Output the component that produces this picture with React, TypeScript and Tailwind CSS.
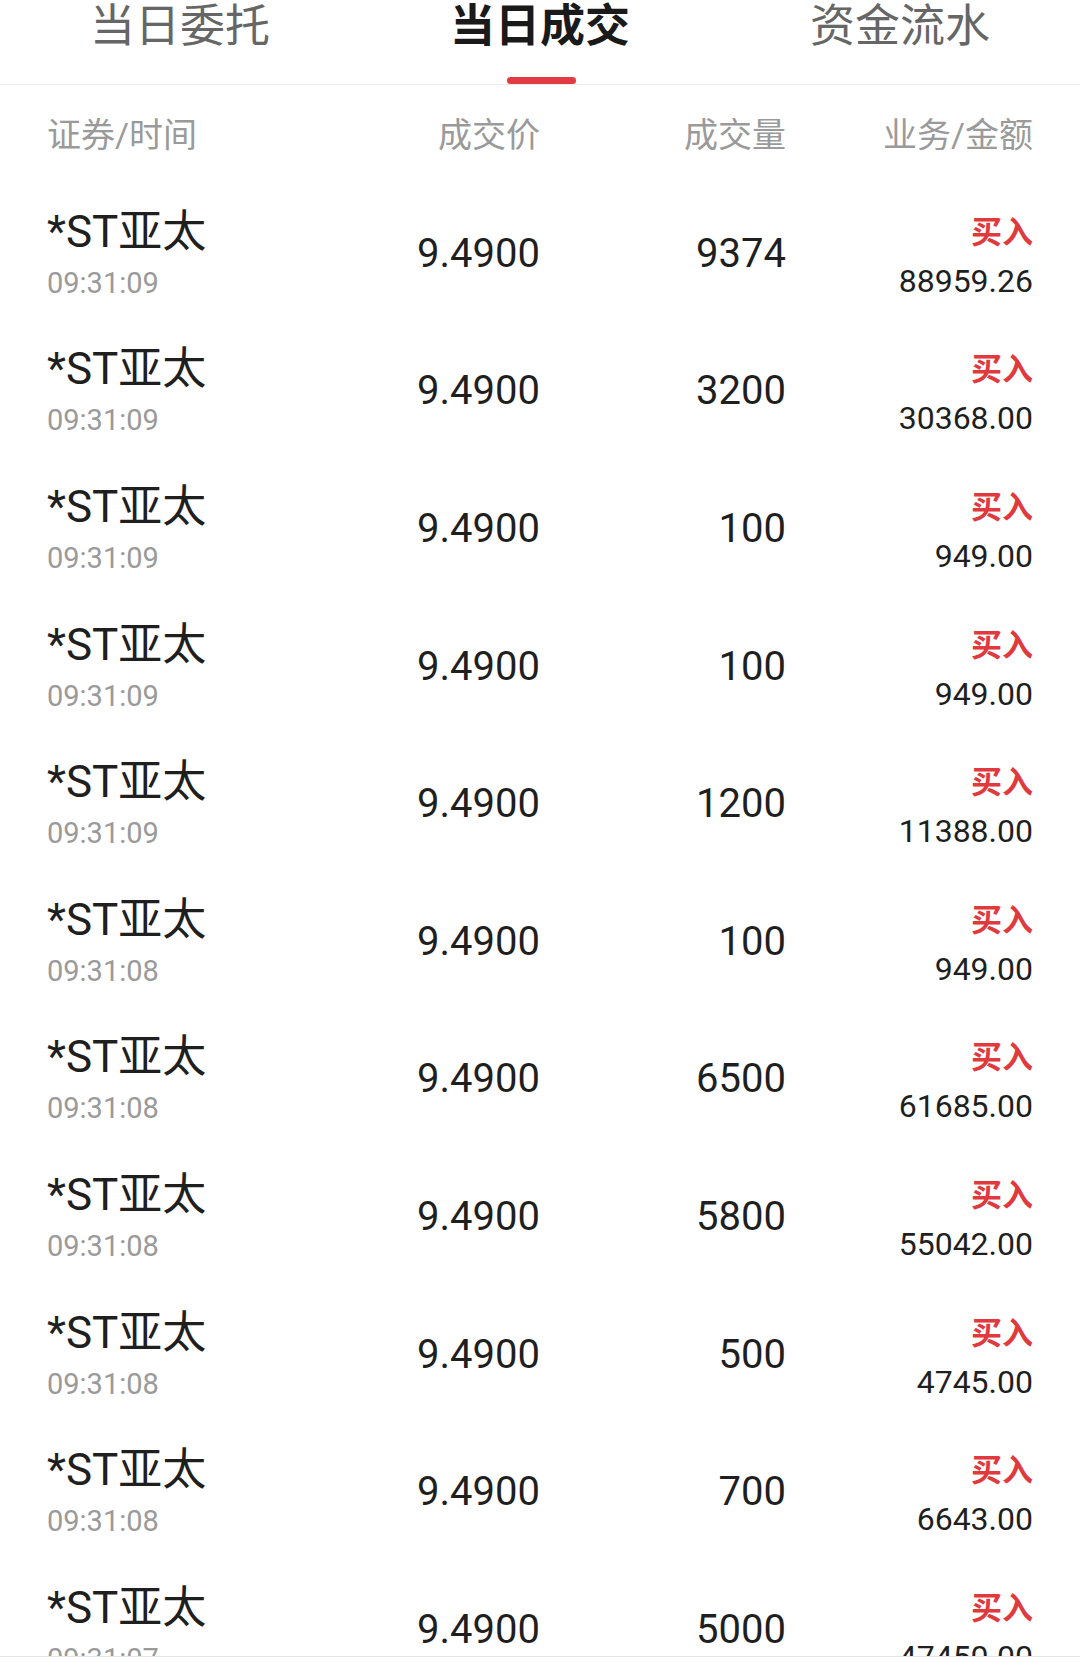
import React from 'react';

type Trade = {
    time: string;
    qty: string;
    amount: string;
};

const trades: Trade[] = [
    { time: '09:31:09', qty: '9374', amount: '88959.26' },
    { time: '09:31:09', qty: '3200', amount: '30368.00' },
    { time: '09:31:09', qty: '100', amount: '949.00' },
    { time: '09:31:09', qty: '100', amount: '949.00' },
    { time: '09:31:09', qty: '1200', amount: '11388.00' },
    { time: '09:31:08', qty: '100', amount: '949.00' },
    { time: '09:31:08', qty: '6500', amount: '61685.00' },
    { time: '09:31:08', qty: '5800', amount: '55042.00' },
    { time: '09:31:08', qty: '500', amount: '4745.00' },
    { time: '09:31:08', qty: '700', amount: '6643.00' },
    { time: '09:31:07', qty: '5000', amount: '47450.00' },
];

const tabs = ['当日委托', '当日成交', '资金流水'];

const font = {
    fontFamily: 'Roboto, "Noto Sans CJK SC", sans-serif',
};

export default function App() {
    return (
        <div className="h-[1673px] w-[1080px] overflow-hidden bg-white" style={font}>
            {/* top tabs */}
            <div className="flex h-[85px] border-b border-[#ececec]">
                {tabs.map((t, i) => (
                    <div key={t} className="relative flex flex-1 justify-center">
                        <span
                            className={
                                i === 1
                                    ? 'mt-[-2px] text-[45px] leading-[58px] font-bold text-[#1a1a1a]'
                                    : 'mt-[-2px] text-[45px] leading-[58px] text-[#666]'
                            }
                        >
                            {t}
                        </span>
                        {i === 1 && (
                            <div className="absolute bottom-[0px] left-[147px] h-[7px] w-[69px] rounded-full bg-[#e23b44]" />
                        )}
                    </div>
                ))}
            </div>

            {/* column header */}
            <div className="grid h-[100px] grid-cols-[300px_193px_246px_247px] items-center px-[47px] text-[34px] text-[#9a9a9a]">
                <div>证券/时间</div>
                <div className="text-right">成交价</div>
                <div className="text-right">成交量</div>
                <div className="text-right">业务/金额</div>
            </div>

            {/* rows */}
            <div className="h-[1471px] overflow-hidden">
                {trades.map((r, i) => (
                    <div
                        key={i}
                        className="grid h-[137.6px] grid-cols-[300px_193px_246px_247px] items-center px-[47px]"
                    >
                        <div className="flex flex-col">
                            <span className="text-[44px] leading-[50px] text-[#1f1f1f]">*ST亚太</span>
                            <span className="mt-[8px] text-[29px] leading-[36px] text-[#9a9a9a]">
                                {r.time}
                            </span>
                        </div>
                        <div className="text-right text-[40px] text-[#1f1f1f]">9.4900</div>
                        <div className="text-right text-[40px] text-[#1f1f1f]">{r.qty}</div>
                        <div className="mt-[6px] flex flex-col items-end">
                            <span className="text-[31px] leading-[40px] font-bold text-[#e0393e]">买入</span>
                            <span className="mt-[8px] text-[32px] leading-[40px] text-[#1f1f1f]">
                                {r.amount}
                            </span>
                        </div>
                    </div>
                ))}
            </div>

            <div className="h-[17px] border-t border-[#e6e6e6] bg-white" />
        </div>
    );
}
